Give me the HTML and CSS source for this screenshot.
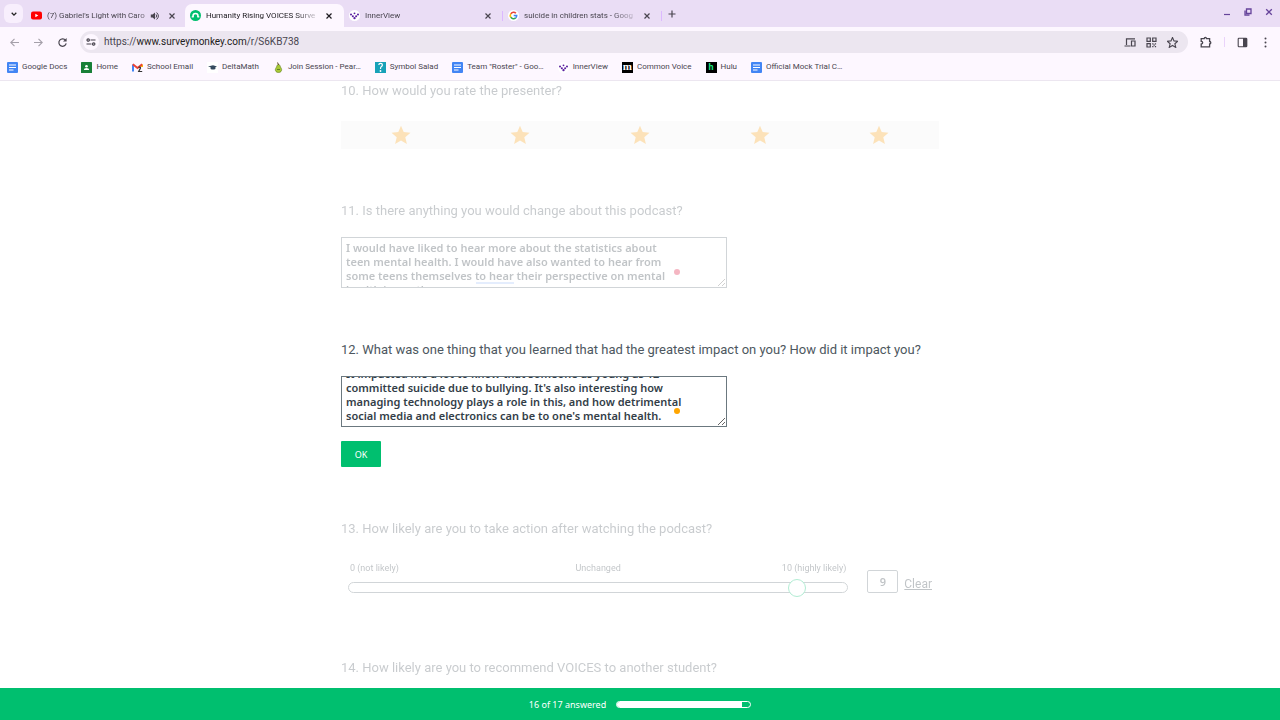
FILE: index.html
```html
<!DOCTYPE html>
<html lang="en">
<head>
	<meta charset="UTF-8">
	<meta name="viewport" content="width=device-width, initial-scale=1.0">
	<title>Humanity Rising VOICES Survey</title>
	<link rel="stylesheet" href="styles.css">
</head>
<body>
	<!-- Shared icons -->
	<svg class="defs" width="0" height="0">
		<symbol id="close" viewBox="0 0 8 8"><path d="M1.500 1.500l5 5M6.500 1.500l-5 5" stroke="currentColor" stroke-width="1.200"/></symbol>
		<symbol id="innerview" viewBox="0 0 12 12"><circle cx="6" cy="6" r="6" fill="#fff"/><g fill="#5b1fa0"><circle cx="2.200" cy="5" r="1.100"/><circle cx="9.800" cy="5" r="1.100"/><circle cx="4.200" cy="6.800" r="1.100"/><circle cx="7.800" cy="6.800" r="1.100"/><circle cx="6" cy="8.800" r="1.300"/><circle cx="6" cy="3.600" r="1"/></g></symbol>
		<symbol id="docs" viewBox="0 0 11 11"><rect width="11" height="11" rx="1" fill="#4285f4"/><path d="M2 3h7M2 5.500h7M2 8h4.500" stroke="#fff" stroke-width="1.100"/></symbol>
		<symbol id="star" viewBox="0 0 20 20"><path d="M10 .8l2.700 6.300 6.800.6-5.200 4.500 1.600 6.700L10 15.400l-5.900 3.500 1.600-6.700L.5 7.700l6.800-.6z"/></symbol>
	</svg>

	<header class="browser">
		<div class="tabs">
			<button class="search-tabs" aria-label="Search tabs"><svg width="8" height="8" viewBox="0 0 8 8"><path d="M1.700 2.800L4 5.100l2.300-2.300" fill="none" stroke="#222" stroke-width="1.300"/></svg></button>
			<div class="tab">
				<svg width="11" height="11" viewBox="0 0 11 11"><rect y="1.500" width="11" height="8" rx="2" fill="#f00"/><path d="M4.300 3.700v3.600l3-1.800z" fill="#fff"/></svg>
				<span class="tab-title">(7) Gabriel's Light with Caro</span>
				<svg class="audio" width="10" height="10" viewBox="0 0 10 10"><path d="M.8 3.600h1.800L5 1.500v7L2.600 6.400H.8z" fill="#49454f"/><path d="M6 3.400q1.300 1.600 0 3.200M6.600 1.500q3.600 3.500 0 7" fill="none" stroke="#49454f"/></svg>
				<button class="close" aria-label="Close tab"><svg width="8" height="8"><use href="#close"/></svg></button>
			</div>
			<div class="tab active">
				<svg width="11" height="11" viewBox="0 0 11 11"><circle cx="5.500" cy="5.500" r="5.500" fill="#00bf6f"/><path d="M3 7V6a2.500 2.500 0 0 1 5 0v1" fill="none" stroke="#fff" stroke-width="1.500"/><path d="M1.700 6.900h2M7.300 6.900h2" stroke="#fff" stroke-width="1.200"/></svg>
				<span class="tab-title">Humanity Rising VOICES Surve</span>
				<button class="close" aria-label="Close tab"><svg width="8" height="8"><use href="#close"/></svg></button>
			</div>
			<div class="tab">
				<svg width="11" height="11"><use href="#innerview"/></svg>
				<span class="tab-title">InnerView</span>
				<button class="close" aria-label="Close tab"><svg width="8" height="8"><use href="#close"/></svg></button>
			</div>
			<div class="tab">
				<svg width="11" height="11" viewBox="0 0 12 12"><circle cx="6" cy="6" r="6" fill="#fff"/><g fill="none" stroke-width="1.700"><path d="M3 4.200A3.500 3.500 0 0 1 8.600 3.500" stroke="#ea4335"/><path d="M3 7.800A3.500 3.500 0 0 1 3 4.200" stroke="#fbbc05"/><path d="M8.400 8.600A3.500 3.500 0 0 1 3 7.800" stroke="#34a853"/><path d="M6.200 6h3.300A3.500 3.500 0 0 1 8.400 8.600" stroke="#4285f4"/></g></svg>
				<span class="tab-title">suicide in children stats - Goog</span>
				<button class="close" aria-label="Close tab"><svg width="8" height="8"><use href="#close"/></svg></button>
			</div>
			<button class="new-tab" aria-label="New tab"><svg width="8" height="8" viewBox="0 0 8 8"><path d="M4 .5v7M.5 4h7" stroke="#49454f" stroke-width="1.200"/></svg></button>
			<div class="window-buttons">
				<button aria-label="Minimize"><svg width="8" height="8" viewBox="0 0 8 8"><path d="M1 6.500h6" stroke="#65439a" stroke-width="1.200"/></svg></button>
				<button aria-label="Restore"><svg width="8" height="8" viewBox="0 0 8 8"><path d="M2.500 1h4.500v4.500H2.500zM1 2.500V7.200h4.500" fill="none" stroke="#65439a" stroke-width="1.300"/></svg></button>
				<button aria-label="Close"><svg width="8" height="8" viewBox="0 0 8 8"><path d="M1.200 1.200l5.600 5.600M6.800 1.200L1.200 6.800" stroke="#65439a" stroke-width="1.300"/></svg></button>
			</div>
		</div>

		<div class="toolbar">
			<div class="history">
				<button class="muted" aria-label="Back"><svg width="11" height="11" viewBox="0 0 11 11"><path d="M10 5.500H2M5.500 1.800L1.800 5.500l3.700 3.700" fill="none" stroke="currentColor" stroke-width="1.100"/></svg></button>
				<button class="muted" aria-label="Forward"><svg width="11" height="11" viewBox="0 0 11 11"><path d="M1 5.500h8M5.500 1.800l3.700 3.700-3.700 3.700" fill="none" stroke="currentColor" stroke-width="1.100"/></svg></button>
				<button aria-label="Reload"><svg width="11" height="11" viewBox="0 0 11 11"><path d="M8.600 3.400A3.700 3.700 0 1 0 9.200 6.400" fill="none" stroke="currentColor" stroke-width="1.200"/><path d="M9.600 1v3.600H6z" fill="currentColor"/></svg></button>
			</div>
			<div class="omnibox">
				<button class="site-info" aria-label="Site information"><svg width="10" height="10" viewBox="0 0 10 10"><path d="M4.500 3H9.500M.5 7h5" stroke="currentColor" stroke-width="1.200"/><circle cx="2.200" cy="3" r="1.200" fill="none" stroke="currentColor" stroke-width="1.200"/><circle cx="7.700" cy="7" r="1.200" fill="none" stroke="currentColor" stroke-width="1.200"/></svg></button>
				<div class="url">https://<span class="host">www.surveymonkey.com</span>/r/S6KB738</div>
				<button aria-label="Send to device"><svg width="12" height="11" viewBox="0 0 12 11"><path d="M11 1.800H2.500V8M.5 9h6M7.500 4h3.500v5H7.500z" fill="none" stroke="currentColor" stroke-width="1.200"/></svg></button>
				<button aria-label="QR code"><svg width="11" height="11" viewBox="0 0 11 11"><path d="M1 1h3.300v3.300H1zM6.700 1H10v3.300H6.700zM1 6.700h3.300V10H1z" fill="none" stroke="currentColor" stroke-width="1.200"/><path d="M6.200 6.200h1.300v1.300H6.200zM8.800 6.200h1.300v1.300H8.800zM7.500 7.500h1.300v1.300H7.500zM6.200 9h1.300v1.300H6.200zM8.800 9h1.300v1.300H8.800z" fill="currentColor"/></svg></button>
				<button aria-label="Bookmark this page"><svg class="outline-star" width="11" height="11" viewBox="0 0 20 20"><use href="#star" width="20" height="20"/></svg></button>
			</div>
			<button aria-label="Extensions"><svg width="12" height="12" viewBox="0 0 12 12"><path d="M1.200 2.700h3a1.200 1.200 0 0 1 2.400 0h3v2.800a1.200 1.200 0 0 1 0 2.400v3H1.200V8q1.500-.2 1.500-1.300T1.200 5.400z" fill="none" stroke="currentColor" stroke-width="1.300"/></svg></button>
			<span class="divider"></span>
			<button aria-label="Side panel"><svg width="11" height="11" viewBox="0 0 11 11"><rect x="1.200" y="1.200" width="8.600" height="8.600" rx=".8" fill="none" stroke="currentColor" stroke-width="1.100"/><path d="M6 1h4v9H6z" fill="currentColor"/></svg></button>
			<button aria-label="Menu"><svg width="11" height="11" viewBox="0 0 11 11"><g fill="currentColor"><circle cx="5.500" cy="1.600" r="1"/><circle cx="5.500" cy="5.500" r="1"/><circle cx="5.500" cy="9.400" r="1"/></g></svg></button>
		</div>

		<nav class="bookmarks">
			<a href="#"><svg width="11" height="11"><use href="#docs"/></svg>Google Docs</a>
			<a href="#"><svg width="11" height="11" viewBox="0 0 11 11"><rect width="11" height="11" rx=".6" fill="#188038"/><circle cx="5.500" cy="4.200" r="1.300" fill="#fff"/><path d="M2.800 8q0-1.900 2.700-1.900T8.200 8z" fill="#fff"/></svg>Home</a>
			<a href="#"><svg width="11" height="11" viewBox="0 0 11 11"><path d="M1 9.500V2.500" stroke="#4285f4" stroke-width="2"/><path d="M10 5V2.500" stroke="#fbbc04" stroke-width="2"/><path d="M.8 2.300L5.500 6l4.700-3.700" fill="none" stroke="#ea4335" stroke-width="2"/><path d="M6.500 5.500q2-1 2 .6L6.700 9.500h3.500" fill="none" stroke="#333" stroke-width="1.200"/></svg>School Email</a>
			<a href="#"><svg width="11" height="11" viewBox="0 0 11 11"><rect width="11" height="11" fill="#fff"/><path d="M1 4.500l5-1.200 4 1.200-1.600.8v1.600q-2.500 1-4.800 0V5.300z" fill="#34495e"/></svg>DeltaMath</a>
			<a href="#"><svg width="11" height="11" viewBox="0 0 11 11"><path d="M5.500 2.600c1.800 0 1.500 2 2.500 3.300 1.500 2 .3 4.600-2.500 4.600S1.500 7.900 3 5.900C4 4.600 3.700 2.600 5.500 2.600z" fill="#a8c935" stroke="#5f7d22" stroke-width=".6"/><path d="M5.500 3L4.600.5" stroke="#5a4320"/><path d="M4 7.500h3" stroke="#51701e" stroke-width=".8"/></svg>Join Session - Pear…</a>
			<a href="#"><svg width="11" height="11" viewBox="0 0 11 11"><rect width="11" height="11" fill="#17a2b8"/><path d="M3.800 3q0-1.600 1.800-1.600T7.400 3q0 1-1 1.600T5.500 7" fill="none" stroke="#fff" stroke-width="1.200"/><circle cx="5.500" cy="9" r=".9" fill="#fff"/></svg>Symbol Salad</a>
			<a href="#"><svg width="11" height="11"><use href="#docs"/></svg>Team "Roster" - Goo…</a>
			<a href="#"><svg width="11" height="11"><use href="#innerview"/></svg>InnerView</a>
			<a href="#"><span class="favicon mozilla">m</span>Common Voice</a>
			<a href="#"><span class="favicon hulu">h</span>Hulu</a>
			<a href="#"><svg width="11" height="11"><use href="#docs"/></svg>Official Mock Trial C…</a>
		</nav>
	</header>

	<main class="page">
		<form class="survey">
			<section class="question dim">
				<h2>10. How would you rate the presenter?</h2>
				<div class="stars">
					<button type="button" aria-label="1 star"><svg width="20" height="20"><use href="#star"/></svg></button>
					<button type="button" aria-label="2 stars"><svg width="20" height="20"><use href="#star"/></svg></button>
					<button type="button" aria-label="3 stars"><svg width="20" height="20"><use href="#star"/></svg></button>
					<button type="button" aria-label="4 stars"><svg width="20" height="20"><use href="#star"/></svg></button>
					<button type="button" aria-label="5 stars"><svg width="20" height="20"><use href="#star"/></svg></button>
				</div>
			</section>

			<section class="question dim">
				<h2><label for="q11">11. Is there anything you would change about this podcast?</label></h2>
				<div class="answer">
					<textarea id="q11" spellcheck="false">I would have liked to hear more about the statistics about
teen mental health. I would have also wanted to hear from
some teens themselves to hear their perspective on mental
health in youth.</textarea>
					<span class="hint"></span>
					<span class="dot red"></span>
				</div>
			</section>

			<section class="question">
				<h2><label for="q12">12. What was one thing that you learned that had the greatest impact on you? How did it impact you?</label></h2>
				<div class="answer">
					<textarea id="q12" spellcheck="false">It impacted me a lot to know that someone as young as 12
committed suicide due to bullying. It's also interesting how
managing technology plays a role in this, and how detrimental
social media and electronics can be to one's mental health.</textarea>
					<span class="dot orange"></span>
				</div>
				<button class="ok" type="button">OK</button>
			</section>

			<section class="question dim">
				<h2><label for="q13">13. How likely are you to take action after watching the podcast?</label></h2>
				<div class="slider-row">
					<div class="slider">
						<div class="slider-labels">
							<span>0 (not likely)</span>
							<span>Unchanged</span>
							<span>10 (highly likely)</span>
						</div>
						<div class="track">
							<input type="range" id="q13" min="0" max="10" value="9">
						</div>
					</div>
					<input class="value" type="text" value="9" aria-label="Slider value">
					<a class="clear" href="#">Clear</a>
				</div>
			</section>

			<section class="question dim">
				<h2>14. How likely are you to recommend VOICES to another student?</h2>
			</section>
		</form>
	</main>

	<footer class="progress">
		<span id="answered">16 of 17 answered</span>
		<div class="bar" role="progressbar" aria-labelledby="answered" aria-valuemin="0" aria-valuemax="17" aria-valuenow="16"><div class="fill" style="width: 94%"></div></div>
	</footer>

	<script>
		const current = document.getElementById("q12");
		current.scrollTop = current.scrollHeight;
	</script>
</body>
</html>
```
FILE: styles.css
```css
* {
	box-sizing: border-box;
}

body {
	margin: 0;
	height: 100vh;
	display: flex;
	flex-direction: column;
	overflow: hidden;
	background: #fff;
	color: #333e48;
	font-family: "Noto Sans", sans-serif;
}

button {
	border: 0;
	padding: 0;
	background: none;
	color: inherit;
	font: inherit;
	cursor: pointer;
}

svg {
	display: block;
	flex: none;
}

.defs {
	position: absolute;
}

/* Browser */
.browser {
	flex: none;
	background: #fdf7ff;
	border-bottom: 1px solid #ece6f0;
	color: #49454f;
	font: 8px/12px Roboto, sans-serif;
}

.tabs {
	display: flex;
	align-items: center;
	height: 27px;
	padding-left: 4px;
	background: #eaddf5;
}

.search-tabs {
	display: flex;
	align-items: center;
	justify-content: center;
	width: 19px;
	height: 19px;
	margin-right: 3px;
	border-radius: 6px;
	background: #f8effd;
}

.tab {
	display: flex;
	align-items: center;
	gap: 5px;
	width: 159px;
	height: 23px;
	align-self: flex-end;
	padding: 0 11px 0 5px;
}

.tab.active {
	background: #fdf7ff;
	border-radius: 7px 7px 0 0;
	color: #1d1b20;
}

.tab.active ~ .tab {
	background: linear-gradient(#dcb8ff, #dcb8ff) right center / 1px 10px no-repeat;
}

.tab-title {
	flex: 1;
	white-space: nowrap;
	-webkit-mask-image: linear-gradient(to right, #000 88px, transparent 116px);
	mask-image: linear-gradient(to right, #000 88px, transparent 116px);
}

.audio {
	margin-right: 3px;
}

.new-tab {
	margin-left: 6px;
}

.window-buttons {
	display: flex;
	gap: 13px;
	margin-left: auto;
	padding: 0 7px 4px 0;
}

.toolbar {
	display: flex;
	align-items: center;
	gap: 12px;
	height: 30px;
	padding: 0 9px;
}

.history {
	display: flex;
	gap: 13px;
}

.muted {
	color: #a5a0aa;
}

.omnibox {
	flex: 1;
	display: flex;
	align-items: center;
	gap: 10px;
	height: 22px;
	padding: 0 10px 0 3px;
	border-radius: 11px;
	background: #ece6f0;
}

.site-info {
	display: flex;
	align-items: center;
	justify-content: center;
	width: 16px;
	height: 16px;
	border-radius: 50%;
	background: #fdf7ff;
}

.url {
	flex: 1;
	margin-left: -5px;
	font-size: 10px;
}

.host {
	color: #1d1b20;
}

.outline-star {
	fill: none;
	stroke: currentColor;
	stroke-width: 2;
}

.divider {
	width: 1px;
	height: 10px;
	background: #ead3fb;
}

.bookmarks {
	display: flex;
	gap: 14px;
	height: 23px;
	padding: 4px 7px 0;
}

.bookmarks a {
	display: flex;
	align-items: center;
	gap: 4px;
	height: 12px;
	color: inherit;
	text-decoration: none;
	white-space: nowrap;
}

.favicon {
	width: 11px;
	height: 11px;
	background: #000;
	text-align: center;
	font-weight: bold;
	line-height: 11px;
}

.mozilla {
	color: #fff;
	font-family: "Liberation Serif", serif;
	font-size: 11px;
	line-height: 8px;
}

.hulu {
	color: #1ce783;
	font-size: 9px;
}

/* Survey */
.page {
	flex: 1;
	min-height: 0;
	overflow: hidden;
}

.survey {
	display: flex;
	flex-direction: column;
	gap: 52px;
	max-width: 598px;
	margin: 0 auto;
}

.dim {
	opacity: .3;
}

.question h2 {
	margin: 0 0 16px;
	font: 13px/20px Roboto, sans-serif;
	color: #4d5760;
	white-space: nowrap;
}

.stars {
	display: flex;
	height: 28px;
	margin-top: 20px;
	background: #f4f4f4;
}

.stars button {
	flex: 1;
	display: flex;
	align-items: center;
	justify-content: center;
	fill: #f7a21c;
}

.answer {
	position: relative;
	max-width: 386px;
}

textarea {
	display: block;
	width: 100%;
	height: 51px;
	padding: 3px 4px;
	border: 1px solid #6b787f;
	outline: 0;
	overflow: hidden;
	color: inherit;
	font: 600 11px/14px "Noto Sans", sans-serif;
	white-space: pre;
}

.hint {
	position: absolute;
	left: 135px;
	bottom: 4px;
	width: 38px;
	height: 2px;
	background: #a8c7fa;
}

.dot {
	position: absolute;
	right: 47px;
	bottom: 13px;
	width: 6px;
	height: 6px;
	border-radius: 50%;
}

.red {
	background: #e0103a;
}

.orange {
	background: #ffa500;
}

.ok {
	display: block;
	width: 40px;
	height: 26px;
	margin-top: 14px;
	border-radius: 1px;
	background: #00bf6f;
	color: #fff;
	font-size: 9px;
}

.slider-row {
	display: flex;
	align-items: flex-end;
	padding: 6px 7px 13px;
}

.slider {
	flex: 1;
}

.slider-labels {
	display: grid;
	grid-template-columns: 1fr auto 1fr;
	padding: 0 2px;
	margin-bottom: 7px;
	font: 9px/14px Roboto, sans-serif;
}

.slider-labels span:last-child {
	text-align: right;
}

.track {
	display: flex;
	align-items: center;
	height: 11px;
	border: 1px solid #6b787f;
	border-radius: 6px;
}

/* The thumb is centred on the ends of the track */
.track input {
	-webkit-appearance: none;
	appearance: none;
	flex: 1;
	height: 18px;
	margin: 0 -9px;
	background: none;
}

.track input::-webkit-slider-thumb {
	-webkit-appearance: none;
	width: 18px;
	height: 18px;
	border: 1px solid #00bf6f;
	border-radius: 50%;
	background: #fff;
}

.value {
	width: 31px;
	height: 23px;
	margin-left: 19px;
	padding: 0;
	border: 1px solid #6b787f;
	border-radius: 2px;
	color: inherit;
	font: 600 11px "Noto Sans", sans-serif;
	text-align: center;
}

.clear {
	margin-left: 6px;
	color: inherit;
	font: 12px/18px Roboto, sans-serif;
}

/* Progress */
.progress {
	flex: none;
	display: flex;
	align-items: center;
	justify-content: center;
	gap: 10px;
	height: 32px;
	background: #00bf6f;
	color: #fff;
	font-size: 9px;
}

.bar {
	width: 135px;
	height: 7px;
	overflow: hidden;
	border: 1px solid #fff;
	border-radius: 4px;
}

.fill {
	height: 100%;
	background: #fff;
}
```
